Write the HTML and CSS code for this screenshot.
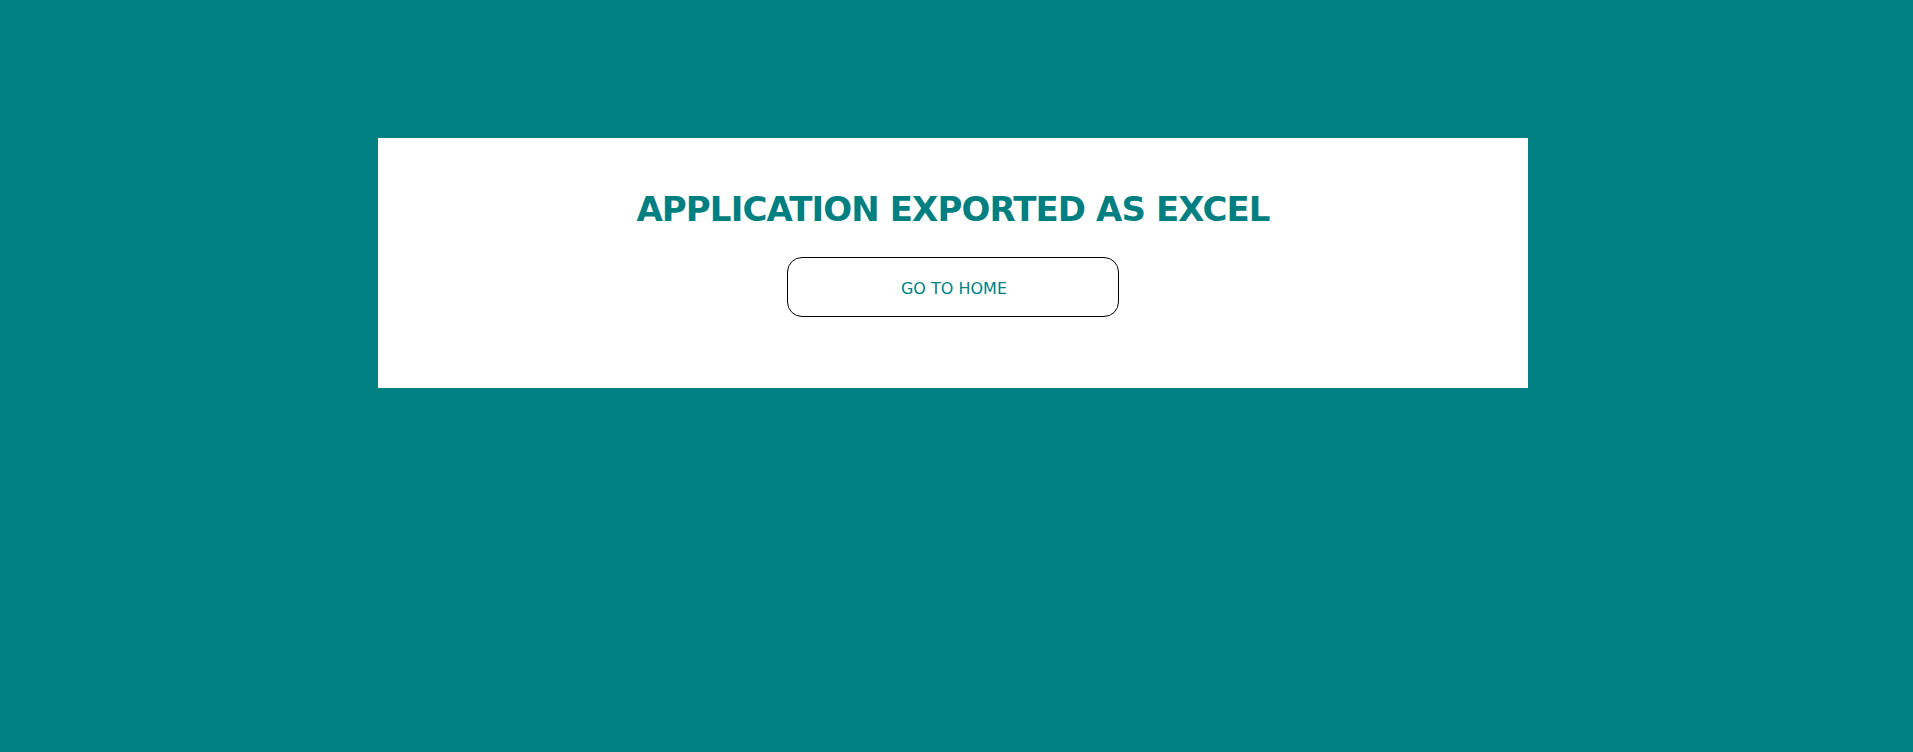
FILE: index.html
```html
<!DOCTYPE html>
<html>
<head>
<meta charset="utf-8">
<link rel="stylesheet" href="styles.css">
</head>
<body>
<div class="card">
  <h1 class="title">APPLICATION EXPORTED AS EXCEL</h1>
  <button class="home-btn">GO TO HOME</button>
</div>
</body>
</html>
```

FILE: styles.css
```css
html, body {
  margin: 0;
  padding: 0;
  background: #008080;
  height: 100%;
}
body {
  font-family: "DejaVu Sans", Verdana, sans-serif;
}
.card {
  box-sizing: border-box;
  margin: 138px 0 0 378px;
  width: 1150px;
  height: 250px;
  background: #fff;
  display: flex;
  flex-direction: column;
  align-items: center;
  padding-top: 51px;
}
.title {
  margin: 0;
  font-size: 34px;
  letter-spacing: -0.9px;
  font-weight: bold;
  color: #007f80;
  line-height: 40px;
}
.home-btn {
  margin-top: 28px;
  width: 332px;
  height: 60px;
  border: 1px solid #000;
  border-radius: 15px;
  background: #fff;
  color: #007f80;
  font-family: "DejaVu Sans", Verdana, sans-serif;
  font-size: 16px;
  padding: 2px 0 0 2px;
}
```
